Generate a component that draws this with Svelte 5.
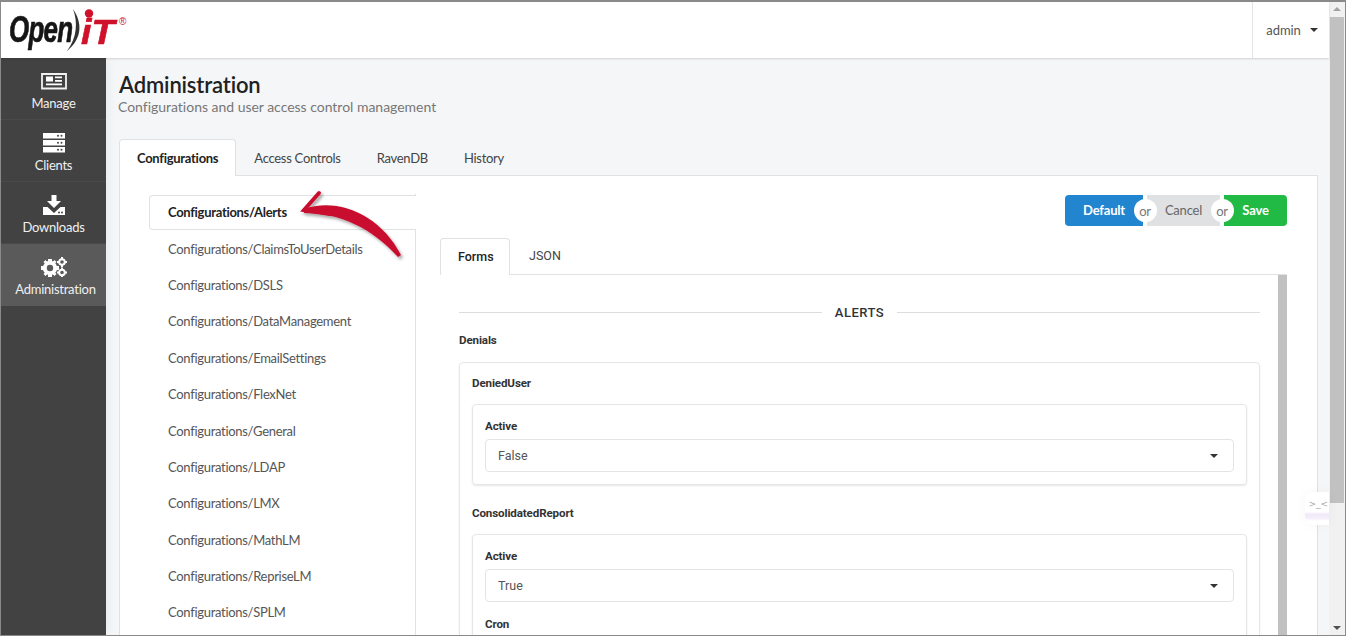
<script>
  const nav = [
    { label: 'Manage', icon: 'news' },
    { label: 'Clients', icon: 'server' },
    { label: 'Downloads', icon: 'download' },
    { label: 'Administration', icon: 'cogs', active: true }
  ];
  const tabs = ['Configurations', 'Access Controls', 'RavenDB', 'History'];
  const configs = ['Alerts', 'ClaimsToUserDetails', 'DSLS', 'DataManagement', 'EmailSettings', 'FlexNet', 'General', 'LDAP', 'LMX', 'MathLM', 'RepriseLM', 'SPLM'];
</script>

<div class="frame">
  <div class="page">
    <header class="top">
      <div class="logo">
        <span class="open">Open</span>
        <span class="it">iT</span>
        <span class="reg">®</span>
        <svg class="logomark" viewBox="0 0 130 56" width="130" height="56">
          <path d="M73 7C82 20 83 36 67 49C77 36 78 20 73 7Z" fill="#333"/>
          <circle cx="89" cy="11.500" r="4.200" fill="#d0112b"/>
        </svg>
      </div>
      <div class="user">admin <span class="caret"></span></div>
    </header>
    <div class="body">
      <aside class="side">
        {#each nav as n}
          <div class="nav" class:active={n.active}>
            <svg class="ic" viewBox="0 0 26 20" width="26" height="20" fill="#fff">
              {#if n.icon === 'news'}
                <path d="M1 3h24v14.500H1z" fill="none" stroke="#f2f2f2" stroke-width="1.800"/>
                <path d="M5 5.500h7v5H5zM14 5.500h7v1.700h-7zM14 9h7v1.700h-7zM5 12.500h16v1.700H5z"/>
              {:else if n.icon === 'server'}
                <path d="M2 0h22v5.500H2zM2 7h22v5.500H2zM2 14h22v5.500H2z"/>
                <g fill="#444"><circle cx="17" cy="2.800" r="1"/><circle cx="20.500" cy="2.800" r="1"/><circle cx="17" cy="9.800" r="1"/><circle cx="20.500" cy="9.800" r="1"/><circle cx="17" cy="16.800" r="1"/><circle cx="20.500" cy="16.800" r="1"/></g>
              {:else if n.icon === 'download'}
                <path d="M10.500-2h5v8h4.500L13 13 6 6h4.500z"/>
                <path d="M2 12h4.500l6.500 6 6.500-6H24v8H2z"/>
                <circle cx="18" cy="17.500" r="1" fill="#444"/><circle cx="21" cy="17.500" r="1" fill="#444"/>
              {:else}
                <circle cx="9" cy="11" r="5.200" fill="none" stroke="#fff" stroke-width="4"/>
                <path d="M7 2h4v3H7zM7 17h4v3H7zM0 9h3v4H0zM15 9h3v4h-3zM2.500 5l2-2 2.500 2.500-2 2zM13.500 3l2 2-2.500 2.500-2-2zM2.500 17l2 2 2.500-2.500-2-2zM15.500 17l-2 2-2.500-2.500 2-2z"/>
                <circle cx="21" cy="5" r="2.800" fill="none" stroke="#fff" stroke-width="2"/>
                <circle cx="21" cy="15.500" r="2.800" fill="none" stroke="#fff" stroke-width="2"/>
                <path d="M20 0h2v2h-2zM20 8h2v2h-2zM16 4h2v2h-2zM24 4h2v2h-2zM20 10.500h2v2h-2zM20 18.500h2v1.500h-2zM16 14.500h2v2h-2zM24 14.500h2v2h-2z"/>
              {/if}
            </svg>
            <span class="navlabel">{n.label}</span>
          </div>
        {/each}
      </aside>
      <main class="main">
        <h1>Administration</h1>
        <p class="sub">Configurations and user access control management</p>
        <div class="tabs">
          {#each tabs as t, i}
            <div class="tab" class:on={i === 0}>{t}</div>
          {/each}
        </div>
        <section class="panel">
          <ul class="list">
            {#each configs as c, i}
              <li class:sel={i === 0}>Configurations/{c}</li>
            {/each}
          </ul>
          <div class="right">
            <div class="btns">
              <div class="b blue">Default<i>or</i></div>
              <div class="b grey">Cancel<i>or</i></div>
              <div class="b green">Save</div>
            </div>
            <div class="tabs inner">
              <div class="tab on">Forms</div>
              <div class="tab">JSON</div>
            </div>
            <div class="formbox">
              <div class="form">
                <div class="divider"><span>ALERTS</span></div>
                <div class="lbl den">Denials</div>
                <div class="card">
                  <div class="lbl">DeniedUser</div>
                  <div class="sub-card">
                    <div class="lbl">Active</div>
                    <div class="select">False<span class="caret"></span></div>
                  </div>
                  <div class="lbl second">ConsolidatedReport</div>
                  <div class="sub-card last">
                    <div class="lbl">Active</div>
                    <div class="select">True<span class="caret"></span></div>
                    <div class="lbl cron">Cron</div>
                  </div>
                </div>
              </div>
              <div class="thumb"></div>
            </div>
          </div>
        </section>
      </main>
    </div>
  </div>
  <div class="scroll">
    <span class="up"></span>
    <div class="sthumb"></div>
    <span class="down"></span>
  </div>
  <svg class="arrow" viewBox="296 186 112 76" width="112" height="76">
    <defs><filter id="sh" x="-20%" y="-20%" width="140%" height="140%"><feDropShadow dx="2" dy="2.500" stdDeviation="1.500" flood-color="#000" flood-opacity=".35"/></filter></defs>
    <g filter="url(#sh)">
      <path fill="#c8102e" d="M304 209C337 197 380 214 401 255L398 257C372 228 340 213 304 213Z"/>
      <path fill="none" stroke="#c8102e" stroke-width="4" stroke-linecap="round" d="M319 193L304 210L330 214"/>
    </g>
  </svg>
  <div class="bubble"><span>&gt;_&lt;</span></div>
</div>

<style>
  :global(body) { margin: 0; }
  .frame {
    position: relative; width: 1346px; height: 636px; box-sizing: border-box; overflow: hidden;
    border: 1px solid #8a8a8a; border-width: 2px 1px 1px 1px;
    display: flex; font-family: Lato, sans-serif; background: #f5f6f8;
  }
  .page { flex: 1; min-width: 0; display: flex; flex-direction: column; }
  .top { height: 56px; flex: none; background: #fff; display: flex; justify-content: space-between; box-shadow: 0 1px 2px rgba(0,0,0,.15); position: relative; z-index: 2; }
  .logo { position: relative; display: flex; align-items: center; padding-left: 8px; height: 56px; font-family: "Liberation Sans", sans-serif; font-weight: 700; font-style: italic; line-height: 1; }
  .open { font-size: 36px; color: #151515; letter-spacing: -1px; transform: scaleX(.72); transform-origin: left center; width: 72px; -webkit-text-stroke: .7px #151515; }
  .it { font-size: 35px; color: #d0112b; margin-top: 2px; transform: scaleX(1.08); transform-origin: left center; width: 37px; -webkit-text-stroke: .6px #d0112b; }
  .reg { font-size: 10px; color: #d0112b; margin: -16px 0 0 1px; font-style: normal; font-weight: 400; }
  .logomark { position: absolute; left: -1px; top: 0; }
  .user { width: 77px; border-left: 1px solid #e4e4e4; display: flex; align-items: center; justify-content: center; gap: 9px; font-size: 13px; letter-spacing: -.1px; color: #555; box-sizing: border-box; padding: 0 0 1px 2px; }
  .user .caret { margin-top: 1px; }
  .caret { width: 0; height: 0; border: 4px solid transparent; border-top-color: #333; border-bottom: 0; display: inline-block; }
  .body { flex: 1; display: flex; min-height: 0; }
  .side { width: 105px; flex: none; background: #424242; box-shadow: 2px 0 10px rgba(0,0,0,.05); position: relative; z-index: 1; }
  .nav { height: 62px; box-sizing: border-box; border-bottom: 1px solid #4a4a4a; color: #f0f0f0; display: flex; flex-direction: column; align-items: center; padding-top: 13px; gap: 4px; font-size: 13px; letter-spacing: -.25px; line-height: 16px; }
  .nav .ic { flex: none; }
  .nav.active { background: #5a5a5a; border-bottom-color: #5a5a5a; }
  .nav.active .navlabel { padding-left: 4px; }
  .main { flex: 1; min-width: 0; padding: 0 11px 0 13px; overflow: hidden; }
  h1 { margin: 13px 0 0; font-size: 22px; line-height: 28px; color: #212121; font-weight: 600; letter-spacing: -.15px; }
  .sub { margin: -1px 0 0 -1px; font-size: 14px; line-height: 18px; color: #777; letter-spacing: -.02px; }
  .tabs { display: flex; margin-top: 23px; height: 36px; position: relative; }
  .tab { padding: 0 18px; display: flex; align-items: center; font-size: 13px; letter-spacing: -.28px; color: #444; height: 37px; box-sizing: border-box; }
  .tab.on { background: #fff; border: 1px solid #e0e1e2; border-bottom: 0; border-radius: 4px 4px 0 0; font-weight: 700; color: #222; padding: 0 17px; position: relative; z-index: 1; }
  .panel { background: #fff; border: 1px solid #e0e1e2; display: flex; height: 470px; box-sizing: border-box; padding: 18px 30px 0 29px; gap: 24px; }
  .list { list-style: none; margin: 0; padding: 0; width: 267px; flex: none; border-right: 1px solid #e0e1e2; height: 600px; box-sizing: border-box; }
  .list li { height: 36.400px; display: flex; align-items: center; padding-left: 19px; font-size: 13px; letter-spacing: -.3px; color: #555; box-sizing: border-box; }
  .list li.sel { background: #fff; color: #222; font-weight: 700; border: 1px solid #e0e1e2; border-right: 0; border-radius: 4px 0 0 4px; margin: 1px -1px 0 0; height: 35.400px; padding: 0 0 1px 18px; letter-spacing: -.3px; }
  .right { flex: 1; min-width: 0; padding-top: 1px; }
  .btns { display: flex; justify-content: flex-end; height: 31px; gap: 4px; }
  .b { position: relative; display: flex; align-items: center; justify-content: center; height: 31px; box-sizing: border-box; padding-bottom: 1px; font-size: 13px; letter-spacing: -.2px; font-weight: 700; color: #fff; }
  .blue { width: 78px; background: #2185d0; border-radius: 4px 0 0 4px; }
  .grey { width: 73px; background: #e0e1e2; color: #666; font-weight: 400; }
  .green { width: 63px; background: #21ba45; border-radius: 0 4px 4px 0; }
  .b i { position: absolute; right: -13.500px; top: 4px; width: 23px; height: 23px; border-radius: 50%; background: #fff; color: #777; font-style: normal; font-weight: 400; font-size: 13px; display: flex; align-items: center; justify-content: center; z-index: 1; }
  .inner { margin-top: 12px; height: 36px; font-family: Roboto, sans-serif; }
  .inner .tab { letter-spacing: 0; font-size: 12.500px; padding: 0 18px 2px 19px; }
  .inner .tab.on { font-weight: 500; padding: 0 17px 2px; width: 70px; }
  .formbox { position: relative; background: #fff; border-top: 1px solid #e0e1e2; padding: 0 27px 0 19px; height: 380px; overflow: hidden; }
  .thumb { position: absolute; right: 0; top: 0; bottom: 0; width: 9px; background: #c1c1c1; }
  .form { font-family: Roboto, sans-serif; }
  .divider { display: flex; align-items: center; gap: 13px; margin-top: 29px; height: 16px; font-size: 13px; font-weight: 500; letter-spacing: .5px; color: #333; }
  .divider::before, .divider::after { content: ""; flex: 1; height: 1px; background: #ddd; }
  .lbl { font-size: 11.600px; font-weight: 700; letter-spacing: -.13px; color: #333; line-height: 16px; }
  .den { margin-top: 12px; }
  .card { margin-top: 14px; border: 1px solid #e6e6e8; border-radius: 4px; padding: 12px 12px 0; box-shadow: 0 1px 2px rgba(0,0,0,.08); height: 400px; box-sizing: border-box; }
  .sub-card { margin-top: 13px; border: 1px solid #e6e6e8; border-radius: 4px; padding: 13px 12px 12px; box-shadow: 0 1px 2px rgba(0,0,0,.1); }
  .sub-card.last { height: 200px; }
  .second { margin-top: 20px; }
  .cron { margin-top: 14px; }
  .select { margin-top: 5px; height: 33px; box-sizing: border-box; border: 1px solid #e3e4e6; border-radius: 4px; display: flex; align-items: center; justify-content: space-between; padding: 0 15px 0 12px; font-size: 12.500px; color: #555; }
  .scroll { width: 16px; flex: none; background: #f1f1f1; position: relative; }
  .sthumb { position: absolute; left: 1px; right: 1px; top: 15px; height: 486px; background: #c1c1c1; }
  .up, .down { position: absolute; left: 4px; width: 0; height: 0; border: 4px solid transparent; }
  .up { top: 5px; border-top: 0; border-bottom-color: #a3a3a3; }
  .down { bottom: 5px; border-bottom: 0; border-top-color: #505050; }
  .arrow { position: absolute; left: 295px; top: 184px; }
  .bubble { position: absolute; right: 16px; top: 490px; width: 24px; height: 33px; background: linear-gradient(to bottom, #fff 0 20px, #f0e9f8 22px, #f3eefa 26px, #fff 29px); border-radius: 8px 0 0 8px; box-shadow: 0 0 12px rgba(0,0,0,.04); font-size: 9px; color: #aaa; text-align: right; padding-right: 1px; box-sizing: border-box; line-height: 24px; font-family: "DejaVu Sans", sans-serif; }
  .bubble span { display: block; }
</style>
